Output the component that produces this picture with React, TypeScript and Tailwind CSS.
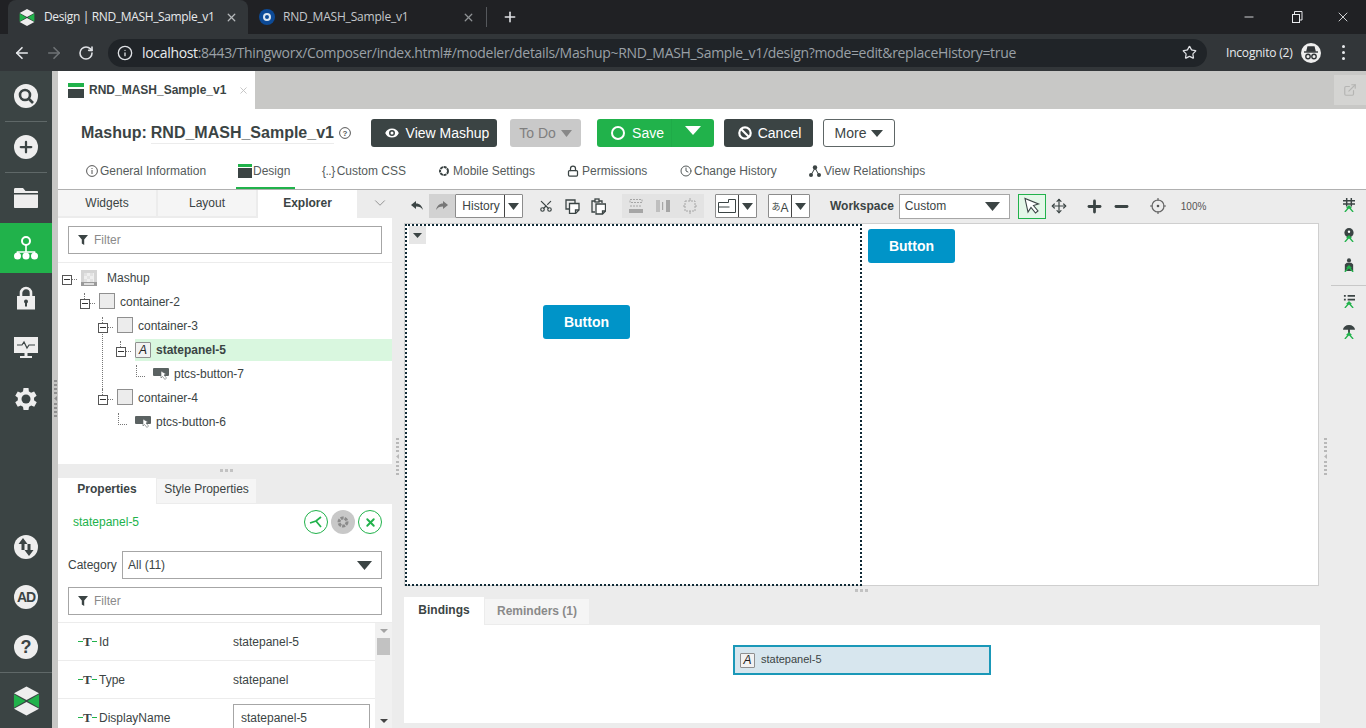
import React from "react";
import { ArrowLeft, ArrowRight, RotateCw, Info, Star, X, Plus, Minus, Scissors, ChevronDown, Move, Eye, ExternalLink, Clock, Lock } from "lucide-react";

const Tri = ({ w = 12, h = 8, c = "#3b4444" }: { w?: number; h?: number; c?: string }) => (
  <svg width={w} height={h} viewBox="0 0 12 8" preserveAspectRatio="none" className="shrink-0">
    <polygon points="0,0 12,0 6,8" fill={c} />
  </svg>
);

const FilterIcon = () => (
  <svg width="10" height="10" viewBox="0 0 10 10" className="shrink-0">
    <polygon points="0,0 10,0 6.2,4.5 6.2,10 3.8,8.5 3.8,4.5" fill="#3b4444" />
  </svg>
);

const TwxLogo = ({ w, h }: { w: number; h: number }) => (
  <svg width={w} height={h} viewBox="0 0 28 30" className="shrink-0">
    <polygon points="14,0 27,7 14,14 1,7" fill="#eeeeee" />
    <polygon points="14,16 27,23 14,30 1,23" fill="#eeeeee" />
    <polygon points="1,8 13,15 1,22" fill="#21b24b" />
    <polygon points="27,8 15,15 27,22" fill="#21b24b" />
  </svg>
);

const RailCircle = ({ children }: { children: React.ReactNode }) => (
  <div className="flex h-[24px] w-[24px] items-center justify-center rounded-full bg-[#eeeeee] text-[#3b4444]">{children}</div>
);

const RailItem = ({ h = 50, border, active, children }: { h?: number; border?: boolean; active?: boolean; children: React.ReactNode }) => (
  <div
    className={`flex shrink-0 items-center justify-center ${active ? "bg-[#21b24b]" : ""} ${border ? "mx-[5px] border-b border-[#5f6868]" : ""}`}
    style={{ height: h }}
  >
    {children}
  </div>
);

const Rail = () => (
  <div className="flex w-[52px] shrink-0 flex-col bg-[#3b4444]">
    <RailItem h={51} border>
      <RailCircle>
        <svg width="18" height="18" viewBox="0 0 18 18" fill="none" stroke="#3b4444" strokeWidth="2.6">
          <circle cx="8" cy="8" r="5" />
          <path d="M11.5 11.5L16 16" />
        </svg>
      </RailCircle>
    </RailItem>
    <RailItem h={51} border>
      <RailCircle>
        <Plus size={18} strokeWidth={3} />
      </RailCircle>
    </RailItem>
    <RailItem h={50}>
      <svg width="26" height="22" viewBox="0 0 26 22">
        <path d="M1 2.5C1 1.5 1.5 1 2.5 1H10l2.5 3H24c.7 0 1 .4 1 1v1H1z" fill="#eeeeee" />
        <path d="M1 7.5h24V20c0 .7-.4 1-1 1H2c-.7 0-1-.4-1-1z" fill="#eeeeee" />
      </svg>
    </RailItem>
    <RailItem active>
      <svg width="26" height="26" viewBox="0 0 26 26" fill="none">
        <circle cx="13" cy="6" r="4" stroke="#fff" strokeWidth="2" />
        <path d="M13 10v7M4.5 20v-3h17v3" stroke="#fff" strokeWidth="1.6" />
        <circle cx="4.5" cy="21" r="3.5" fill="#fff" />
        <circle cx="13" cy="21" r="3.5" fill="#fff" />
        <circle cx="21.5" cy="21" r="3.5" fill="#fff" />
      </svg>
    </RailItem>
    <RailItem>
      <svg width="20" height="24" viewBox="0 0 20 24">
        <path d="M5 11V7a5 5 0 0110 0v4" fill="none" stroke="#eeeeee" strokeWidth="2.6" />
        <rect x="1" y="10" width="18" height="13.5" fill="#eeeeee" />
        <circle cx="10" cy="15.5" r="2" fill="#3b4444" />
        <rect x="9" y="16" width="2" height="4.5" fill="#3b4444" />
      </svg>
    </RailItem>
    <RailItem>
      <svg width="24" height="22" viewBox="0 0 24 22">
        <rect x="0" y="0" width="24" height="16" fill="#eeeeee" />
        <path d="M3 8h5l2-3 3 6 2-3h6" fill="none" stroke="#3b4444" strokeWidth="1.2" />
        <rect x="10.5" y="16" width="3" height="3" fill="#eeeeee" />
        <rect x="6" y="19" width="12" height="2" fill="#eeeeee" />
      </svg>
    </RailItem>
    <RailItem>
      <svg width="30" height="30" viewBox="0 0 24 24" className="mt-[2px]">
        <path
          d="M19.4 13a7.6 7.6 0 000-2l2.1-1.6-2-3.5-2.5 1a7.6 7.6 0 00-1.7-1L15 3.2h-4l-.4 2.7a7.6 7.6 0 00-1.7 1l-2.5-1-2 3.5L6.500 11a7.6 7.6 0 000 2l-2.1 1.6 2 3.5 2.5-1a7.6 7.6 0 001.7 1l.4 2.7h4l.4-2.7a7.6 7.6 0 001.7-1l2.5 1 2-3.500z"
          fill="#eeeeee"
          transform="translate(-1 0)"
        />
        <circle cx="12" cy="12" r="3.6" fill="#3b4444" />
      </svg>
    </RailItem>
    <div className="flex-1" />
    <RailItem>
      <RailCircle>
        <svg width="18" height="20" viewBox="0 0 18 20" fill="#3b4444">
          <path d="M6 1L1.5 7H4.5V13H7.5V7H10.500z" />
          <path d="M12 19L16.500 13H13.500V7H10.500V13H7.500z" />
        </svg>
      </RailCircle>
    </RailItem>
    <RailItem>
      <RailCircle>
        <span className="text-[14px] font-bold tracking-[-1px]">AD</span>
      </RailCircle>
    </RailItem>
    <RailItem>
      <RailCircle>
        <span className="text-[18px] font-bold">?</span>
      </RailCircle>
    </RailItem>
    <div className="flex h-[56px] shrink-0 items-center justify-center border-t border-[#5f6868]">
      <TwxLogo w={27} h={30} />
    </div>
  </div>
);

const ChromeBar = () => (
  <div className="shrink-0 font-['Open_Sans',sans-serif]">
    <div className="flex h-[34px] items-center bg-[#202124] text-[12px]">
      <div className="ml-[8px] flex h-[34px] w-[240px] items-center rounded-t-[8px] bg-[#323639] pl-[11px] pr-[10px] text-[#e8eaed]">
        <TwxLogo w={16} h={17} />
        <span className="ml-[9px] flex-1 truncate tracking-[-0.35px]">Design | RND_MASH_Sample_v1</span>
        <X size={13} strokeWidth={2.4} className="text-[#b5b8bb]" />
      </div>
      <div className="flex h-[34px] w-[238px] items-center pl-[11px] pr-[11px] text-[#c5c8cb]">
        <div className="flex h-[16px] w-[16px] items-center justify-center rounded-full bg-[#0d4a96]">
          <div className="h-[8px] w-[8px] rounded-full border-2 border-[#dce6f0]" />
        </div>
        <span className="ml-[8px] flex-1 truncate tracking-[-0.2px]">RND_MASH_Sample_v1</span>
        <X size={13} strokeWidth={2.4} className="text-[#8f9295]" />
      </div>
      <div className="h-[20px] w-px bg-[#55585c]" />
      <Plus size={16} strokeWidth={2.4} className="ml-[15px] text-[#dfe1e5]" />
      <div className="flex-1" />
      <Minus size={14} strokeWidth={1.5} className="mr-[35px] text-[#e8eaed]" />
      <svg width="12" height="12" viewBox="0 0 12 12" fill="none" stroke="#e8eaed" className="mr-[32px]">
        <rect x="1.500" y="3.500" width="7" height="8" />
        <path d="M3.500 3V.5H11V9H9" />
      </svg>
      <X size={16} strokeWidth={1.3} className="mr-[15px] text-[#e8eaed]" />
    </div>
    <div className="flex h-[37px] items-center bg-[#323639]">
      <ArrowLeft size={18} strokeWidth={2.2} className="ml-[13px] text-[#e8eaed]" />
      <ArrowRight size={18} strokeWidth={2.2} className="ml-[14px] text-[#6f7376]" />
      <RotateCw size={16} strokeWidth={2.4} className="ml-[15px] text-[#dfe1e5]" />
      <div className="ml-[14px] flex h-[28px] w-[1099px] items-center rounded-full bg-[#202428] pl-[9px] pr-[10px] text-[14px]">
        <Info size={16} className="text-[#dfe1e5]" />
        <span className="ml-[9px] flex-1 tracking-[-0.32px] text-[#9aa0a6]">
          <span className="text-[#e8eaed]">localhost</span>:8443/Thingworx/Composer/index.html#/modeler/details/Mashup~RND_MASH_Sample_v1/design?mode=edit&amp;replaceHistory=true
        </span>
        <Star size={15} strokeWidth={2} className="text-[#dfe1e5]" />
      </div>
      <span className="ml-[19px] text-[12px] tracking-[-0.2px] text-[#e8eaed]">Incognito (2)</span>
      <div className="ml-[8px] flex h-[20px] w-[20px] items-center justify-center rounded-full bg-[#eeeeee]">
        <svg width="16" height="14" viewBox="0 0 16 14" fill="none" stroke="#323639" strokeWidth="1.400">
          <path d="M1 6h14" />
          <path d="M4 5l1-4h6l1 4z" fill="#323639" />
          <circle cx="5" cy="10.500" r="2.200" />
          <circle cx="11" cy="10.500" r="2.200" />
        </svg>
      </div>
      <div className="ml-[21px] flex flex-col gap-[3px]">
        <div className="h-[3px] w-[3px] rounded-full bg-[#e8eaed]" />
        <div className="h-[3px] w-[3px] rounded-full bg-[#e8eaed]" />
        <div className="h-[3px] w-[3px] rounded-full bg-[#e8eaed]" />
      </div>
    </div>
  </div>
);

const DesignGlyph = ({ size = 14 }: { size?: number }) => (
  <svg width={size} height={size} viewBox="0 0 14 14" className="shrink-0">
    <rect width="14" height="3" fill="#21b24b" />
    <rect y="4" width="14" height="10" fill="#3b4444" />
  </svg>
);

const TabRow = () => (
  <div className="flex h-[38px] shrink-0 bg-[#c8c8c6]">
    <div className="flex w-[197px] items-center bg-white pl-[10px] text-[12px] font-bold text-[#3b4444]">
      <svg width="16" height="15" viewBox="0 0 16 15" className="shrink-0">
        <rect width="16" height="4" fill="#21b24b" />
        <rect y="6" width="16" height="9" fill="#3b4444" />
      </svg>
      <span className="ml-[5px]">RND_MASH_Sample_v1</span>
      <X size={11} strokeWidth={2} className="ml-[12px] text-[#c2c2c2]" />
    </div>
    <div className="flex-1" />
    <div className="my-[4px] flex w-[32px] items-center justify-center bg-[#d4d4d2]">
      <ExternalLink size={14} className="text-[#b5b5b3]" />
    </div>
  </div>
);

const Btn = ({ w, className, children }: { w: number; className: string; children: React.ReactNode }) => (
  <div className={`flex h-[28px] shrink-0 items-center justify-center rounded-[3px] text-[14px] ${className}`} style={{ width: w }}>
    {children}
  </div>
);

const NavItem = ({ icon, label, w, pl = 2, gap = 2, active }: { icon: React.ReactNode; label: string; w: number; pl?: number; gap?: number; active?: boolean }) => (
  <div
    className={`flex h-[35px] shrink-0 items-center border-b-2 text-[12px] ${active ? "border-[#21b24b]" : "border-transparent"}`}
    style={{ width: w, paddingLeft: pl }}
  >
    {icon}
    <span style={{ marginLeft: gap }}>{label}</span>
  </div>
);

const Header = () => (
  <div className="flex h-[80px] shrink-0 flex-col bg-white pl-[23px]">
    <div className="flex h-[45px] items-start pt-[10px]">
      <div className="flex h-[28px] w-[290px] shrink-0 items-center text-[16px] font-bold text-[#3b4444]">
        <span>Mashup:</span>
        <span className="ml-[4px] border-b border-[#ececec] leading-[20px]">RND_MASH_Sample_v1</span>
        <svg width="12" height="12" viewBox="0 0 12 12" fill="none" stroke="#555" className="ml-[5px]">
          <circle cx="6" cy="6" r="5.400" />
          <text x="6" y="9" fontSize="8" textAnchor="middle" fill="#555" stroke="none">?</text>
        </svg>
      </div>
      <Btn w={126} className="bg-[#3b4444] pl-[4px] text-white">
        <Eye size={18} fill="#fff" stroke="#3b4444" className="mr-[5px]" />
        View Mashup
      </Btn>
      <Btn w={71} className="ml-[13px] bg-[#c9c9c9] text-[#7f7f7f]">
        To Do
        <span className="ml-[5px]">
          <Tri w={11} h={7} c="#888888" />
        </span>
      </Btn>
      <Btn w={117} className="ml-[16px] bg-[#21b24b] text-white">
        <div className="flex h-full w-[75px] items-center justify-end border-r border-[#1fab48] pr-[7px]">
          <div className="mr-[7px] h-[14px] w-[14px] rounded-full border-2 border-white" />
          Save
        </div>
        <div className="flex h-full flex-1 items-center justify-center pb-[6px]">
          <Tri w={16} h={9} c="#ffffff" />
        </div>
      </Btn>
      <Btn w={89} className="ml-[10px] bg-[#3b4444] pl-[2px] text-white">
        <svg width="14" height="14" viewBox="0 0 14 14" fill="none" stroke="#fff" strokeWidth="2.200" className="mr-[6px]">
          <circle cx="7" cy="7" r="5.700" />
          <path d="M3 3l8 8" />
        </svg>
        Cancel
      </Btn>
      <Btn w={72} className="ml-[10px] border border-[#5e6666] bg-white text-[#3b4444]">
        More
        <span className="ml-[5px]">
          <Tri w={12} h={7} />
        </span>
      </Btn>
    </div>
    <div className="flex text-[#555b5b]">
      <NavItem
        w={155}
        pl={5}
        label="General Information"
        icon={
          <svg width="12" height="12" viewBox="0 0 12 12" fill="none" stroke="#555">
            <circle cx="6" cy="6" r="5.400" />
            <path d="M6 5v4M6 3v1" />
          </svg>
        }
      />
      <NavItem w={59} gap={1} active label="Design" icon={<DesignGlyph />} />
      <div className="w-[24px]" />
      <NavItem w={116} pl={3} label="Custom CSS" icon={<span className="text-[12px] tracking-[-0.5px]">{"{..}"}</span>} />
      <NavItem
        w={130}
        pl={3}
        gap={3}
        label="Mobile Settings"
        icon={
          <svg width="12" height="12" viewBox="0 0 12 12" fill="none" stroke="#3b4444" strokeWidth="2">
            <circle cx="6" cy="6" r="4" strokeDasharray="3 .6" />
          </svg>
        }
      />
      <NavItem w={111} gap={3} label="Permissions" icon={<Lock size={12} strokeWidth={2.500} className="text-[#3b4444]" />} />
      <NavItem w={131} pl={4} label="Change History" icon={<Clock size={12} />} />
      <NavItem
        w={130}
        gap={3}
        label="View Relationships"
        icon={
          <svg width="12" height="12" viewBox="0 0 12 12" fill="#3b4444">
            <circle cx="6" cy="2.500" r="2.200" />
            <circle cx="2" cy="10" r="2" />
            <circle cx="10" cy="10" r="2" />
            <path d="M5.500 3L1.500 10h1L6 4l3.500 6h1L6.500 3z" />
          </svg>
        }
      />
    </div>
  </div>
);

const SearchBox = () => (
  <div className="flex h-[28px] items-center border border-[#a6a6a6] bg-white pl-[9px] text-[12px] text-[#8a8a8a]">
    <FilterIcon />
    <span className="ml-[6px]">Filter</span>
  </div>
);

const PanelTab = ({ label, w, active }: { label: string; w: number; active?: boolean }) => (
  <div
    className={`flex shrink-0 items-center justify-center text-[12px] text-[#3b4444] ${active ? "h-[28px] bg-white pb-[3px] font-bold" : "mr-[2px] h-[26px] bg-[#f5f5f5]"}`}
    style={{ width: w }}
  >
    {label}
  </div>
);

const Toggle = () => (
  <div className="relative mt-[3px] flex h-[10px] w-[10px] shrink-0 items-center justify-center border border-[#555] bg-white">
    <div className="h-px w-[6px] bg-[#333]" />
  </div>
);

const StateGlyph = ({ size = 16 }: { size?: number }) => (
  <div
    className="flex shrink-0 items-center justify-center rounded-[1px] border border-[#8f8f8f] bg-[#f2f2f2] text-[12px] italic leading-none text-[#222]"
    style={{ width: size, height: size }}
  >
    A
  </div>
);

const BoxGlyph = () => <div className="mb-[3px] h-[16px] w-[16px] shrink-0 border border-[#8f8f8f] bg-[#ececec]" />;

const ButtonGlyph = () => (
  <svg width="16" height="13" viewBox="0 0 16 13" className="shrink-0">
    <rect width="16" height="8" rx="1" fill="#5b6262" />
    <path d="M8 3l5 3-2 1 2.500 3-1.500 1.500L9.500 8.500 8 10z" fill="#fff" stroke="#5b6262" strokeWidth=".6" />
  </svg>
);

const MashupGlyph = () => (
  <svg width="16" height="16" viewBox="0 0 16 16" className="shrink-0">
    <rect width="16" height="16" fill="#d5d5d5" />
    <rect x="3" y="3" width="10" height="9" fill="#efefef" />
    <path d="M3 3h3v3H3zm6 0h3v3H9zM6 6h3v3H6zM3 9h3v3H3zm6 0h3v3H9z" fill="#e2e2e2" />
    <rect y="12" width="16" height="4" fill="#9a9a9a" />
    <rect x="3" y="13" width="10" height="2" fill="#dddddd" />
  </svg>
);

const treeRows = [
  { label: "Mashup", x: 4, icon: <MashupGlyph />, gap: 10, toggle: true },
  { label: "container-2", x: 22, icon: <BoxGlyph />, gap: 5, toggle: true, stem: true },
  { label: "container-3", x: 40, icon: <BoxGlyph />, gap: 5, toggle: true, stem: true },
  { label: "statepanel-5", x: 58, icon: <StateGlyph />, gap: 5, toggle: true, stem: true, selected: true },
  { label: "ptcs-button-7", x: 76, icon: <ButtonGlyph />, gap: 5, toggle: false },
  { label: "container-4", x: 40, icon: <BoxGlyph />, gap: 5, toggle: true, stem: true },
  { label: "ptcs-button-6", x: 58, icon: <ButtonGlyph />, gap: 5, toggle: false },
];

const Tree = () => (
  <div className="relative flex flex-col pt-[3px] text-[12px] text-[#3b4444]">
    {/* long guide from container-3 down to container-4 */}
    <div className="absolute left-[44px] top-[54px] h-[76px] border-l border-dotted border-[#777]" />
    {treeRows.map((row) => (
      <div key={row.label} className="relative flex h-[24px] items-center" style={{ paddingLeft: row.x }}>
        {row.selected && <div className="absolute bottom-[1px] left-[77px] right-0 top-[1px] bg-[#d9f7df]" />}
        {row.toggle ? (
          <>
            {row.stem && <div className="absolute top-[3px] h-[6px] border-l border-dotted border-[#777]" style={{ left: row.x + 4 }} />}
            <Toggle />
            <div className="mt-[3px] w-[5px] border-t border-dotted border-[#777]" />
          </>
        ) : (
          <div className="mb-[6px] mr-[4px] ml-[2px] h-[12px] w-[9px] border-b border-l border-dotted border-[#777]" />
        )}
        <div className="relative ml-[4px] flex items-center">
          {row.icon}
          <span className={row.selected ? "font-bold" : ""} style={{ marginLeft: row.gap }}>
            {row.label}
          </span>
        </div>
      </div>
    ))}
  </div>
);

const TGlyph = () => (
  <div className="flex w-[17px] shrink-0 items-center">
    <div className="h-px w-[5px] shrink-0 bg-[#21b24b]" />
    <span className="font-['Liberation_Serif',serif] text-[13px] font-bold leading-none text-[#3b4444]">T</span>
    <div className="h-px w-[5px] shrink-0 bg-[#21b24b]" />
  </div>
);

const PropRow = ({ label, h = 38, children }: { label: string; h?: number; children: React.ReactNode }) => (
  <div className="flex shrink-0 items-center border-b border-[#ececec] pl-[20px]" style={{ height: h }}>
    <TGlyph />
    <span className="ml-[4px] w-[134px] shrink-0">{label}</span>
    {children}
  </div>
);

const ActionCircle = ({ gray, children }: { gray?: boolean; children: React.ReactNode }) => (
  <div
    className={`flex h-[24px] w-[24px] items-center justify-center rounded-full ${gray ? "bg-[#c8c8c8]" : "border border-[#21b24b] bg-white"}`}
  >
    {children}
  </div>
);

const LeftPanel = () => (
  <div className="flex w-[334px] shrink-0 flex-col">
    <div className="flex h-[28px] shrink-0">
      <PanelTab label="Widgets" w={98} />
      <PanelTab label="Layout" w={98} />
      <PanelTab label="Explorer" w={99} active />
      <div className="flex flex-1 items-center justify-end pb-[2px] pr-[3px]">
        <ChevronDown size={18} strokeWidth={1} className="text-[#777]" />
      </div>
    </div>
    <div className="h-[246px] shrink-0 bg-white">
      <div className="border-b border-[#ececec] px-[10px] pb-[8px] pt-[8px]">
        <SearchBox />
      </div>
      <Tree />
    </div>
    <div className="h-[14px] shrink-0" />
    <div className="flex h-[26px] shrink-0">
      <div className="flex h-[26px] w-[98px] items-center justify-center bg-white pb-[5px] text-[12px] font-bold text-[#3b4444]">Properties</div>
      <div className="ml-px mt-px flex h-[24px] w-[99px] items-center justify-center bg-[#f5f5f5] pb-[5px] text-[12px] text-[#3b4444]">Style Properties</div>
    </div>
    <div className="flex min-h-0 flex-1 flex-col bg-white text-[12px] text-[#3b4444]">
      <div className="flex h-[47px] shrink-0 items-center justify-between pb-[11px] pl-[15px] pr-[10px]">
        <span className="text-[#21b24b]">statepanel-5</span>
        <div className="flex gap-[3px]">
          <ActionCircle>
            <svg width="14" height="14" viewBox="0 0 14 14" fill="none" stroke="#21b24b" strokeWidth="1.800">
              <path d="M1 8l6-2 5-4M7 6l5 6" />
            </svg>
          </ActionCircle>
          <ActionCircle gray>
            <svg width="14" height="14" viewBox="0 0 14 14" fill="none" stroke="#8a8a8a" strokeWidth="3">
              <circle cx="7" cy="7" r="4" strokeDasharray="3 1" />
            </svg>
          </ActionCircle>
          <ActionCircle>
            <X size={13} strokeWidth={3.500} className="text-[#21b24b]" />
          </ActionCircle>
        </div>
      </div>
      <div className="flex shrink-0 items-center px-[10px]">
        <span className="w-[54px] shrink-0">Category</span>
        <div className="flex h-[28px] flex-1 items-center justify-between border border-[#a6a6a6] pl-[5px] pr-[9px]">
          <span>All (11)</span>
          <Tri w={15} h={9} />
        </div>
      </div>
      <div className="shrink-0 px-[10px] pb-[7px] pt-[8px]">
        <SearchBox />
      </div>
      <div className="flex min-h-0 flex-1 border-t border-[#ececec]">
        <div className="flex min-h-0 flex-1 flex-col">
          <PropRow label="Id">
            <span>statepanel-5</span>
          </PropRow>
          <PropRow label="Type">
            <span>statepanel</span>
          </PropRow>
          <PropRow label="DisplayName">
            <div className="flex h-[28px] w-[137px] items-center border border-[#a6a6a6] pl-[7px]">statepanel-5</div>
          </PropRow>
        </div>
        <div className="flex w-[17px] shrink-0 flex-col items-center bg-[#f1f1f1] pt-[6px]">
          <Tri w={8} h={4} c="#a3a3a3" />
          <div className="mt-[5px] h-[17px] w-[13px] bg-[#c2c2c2]" />
          <div className="flex-1" />
          <div className="mb-[5px]">
            <Tri w={8} h={4} c="#444" />
          </div>
        </div>
      </div>
    </div>
  </div>
);

const ToolSelect = ({ w, children }: { w: number; children: React.ReactNode }) => (
  <div className="flex h-[24px] shrink-0 items-stretch rounded-[1px] border border-[#8c8c8c] bg-white" style={{ width: w }}>
    <div className="flex flex-1 items-center justify-center">{children}</div>
    <div className="flex w-[18px] items-center justify-center border-l border-[#444]">
      <Tri w={11} h={7} />
    </div>
  </div>
);

const Toolbar = () => (
  <div className="flex h-[33px] shrink-0 items-center pb-[1px] pl-[4px] text-[12px] text-[#3b4444]">
    <div className="flex h-[24px] w-[18px] items-center justify-center">
      <svg width="12" height="10" viewBox="0 0 12 10" fill="#3b4444">
        <path d="M0 4l5-4v2.500c4 0 6 2.500 7 6.500-1.500-2.500-3.500-3.500-7-3.500V8z" />
      </svg>
    </div>
    <div className="ml-[3px] flex h-[24px] w-[26px] items-center justify-center bg-[#d2d2d2]">
      <svg width="12" height="10" viewBox="0 0 12 10" fill="#777">
        <path d="M12 4L7 0v2.500C3 2.500 1 5 0 9c1.500-2.500 3.500-3.500 7-3.500V8z" />
      </svg>
    </div>
    <ToolSelect w={68}>
      <span className="pl-[2px]">History</span>
    </ToolSelect>
    <Scissors size={14} className="ml-[16px] rotate-[-90deg]" strokeWidth={2} />
    <svg width="15" height="15" viewBox="0 0 15 15" fill="none" stroke="#3b4444" strokeWidth="1.300" className="ml-[12px] shrink-0">
      <path d="M4 10H1V1h9v3" />
      <path d="M4.500 4.500h9.500v6.500l-3.500 3.500h-6z" fill="#fff" />
      <path d="M14 11h-3.500v3.500" />
    </svg>
    <svg width="15" height="17" viewBox="0 0 15 17" fill="none" stroke="#3b4444" strokeWidth="1.300" className="ml-[11px] shrink-0">
      <path d="M4 3H1v11h3" />
      <path d="M8 3h3v2" />
      <rect x="4" y="1" width="4" height="3" />
      <path d="M5 6h9.500v7l-3 3H5z" fill="#fff" />
      <path d="M14.500 13h-3v3" />
    </svg>
    <div className="ml-[16px] flex h-[24px] w-[82px] shrink-0 items-center justify-around bg-[#e3e3e3] text-[#a6a6a6]">
      <svg width="14" height="16" viewBox="0 0 14 16" fill="none" stroke="#a6a6a6">
        <path d="M1 1.500h12v3H1zM1 8h12" strokeDasharray="2 1" />
        <rect x="0" y="11" width="14" height="4" fill="#a6a6a6" stroke="none" />
      </svg>
      <svg width="14" height="14" viewBox="0 0 14 14" fill="#a6a6a6">
        <rect x="0" y="1" width="4" height="12" opacity=".6" />
        <rect x="6" y="3" width="1.200" height="8" />
        <rect x="10" y="1" width="4" height="12" />
      </svg>
      <svg width="14" height="16" viewBox="0 0 14 16" fill="none" stroke="#a6a6a6">
        <rect x="2" y="3" width="10" height="10" strokeDasharray="2 1" />
        <path d="M7 0v3M7 13v3M0 8h2M12 8h2" />
      </svg>
    </div>
    <div className="ml-[11px]">
      <ToolSelect w={42}>
        <svg width="18" height="14" viewBox="0 0 18 14" fill="none" stroke="#3b4444">
          <path d="M.5 3.500h10V.5h7v13H.5zM.5 8h11" />
        </svg>
      </ToolSelect>
    </div>
    <div className="ml-[11px]">
      <ToolSelect w={42}>
        <span className="font-['Noto_Sans_CJK_JP',sans-serif] text-[9px] leading-none">あ</span>
        <span className="mt-[4px] text-[12px] leading-none">A</span>
      </ToolSelect>
    </div>
    <span className="ml-[20px] font-bold">Workspace</span>
    <div className="ml-[5px] flex h-[25px] w-[111px] shrink-0 items-center justify-between border border-[#a6a6a6] bg-white pl-[5px] pr-[9px]">
      Custom
      <Tri w={15} h={9} />
    </div>
    <div className="ml-[8px] flex h-[25px] w-[28px] shrink-0 items-center justify-center border border-[#21b24b] bg-[#e4f7e8]">
      <svg width="18" height="18" viewBox="0 0 18 18" fill="#fff" stroke="#3b4444" strokeWidth="1.100">
        <path d="M2 1.500l3 13.500 3-4.500 4.500 5.500 2.500-2-4.500-5.500 5-1.500z" />
      </svg>
    </div>
    <Move size={16} strokeWidth={1.800} className="ml-[5px] shrink-0" />
    <Plus size={19} strokeWidth={3.500} className="ml-[18px] shrink-0" />
    <Minus size={19} strokeWidth={3.500} className="ml-[8px] shrink-0" />
    <svg width="16" height="16" viewBox="0 0 16 16" fill="none" stroke="#666" strokeWidth="1.200" className="ml-[19px] shrink-0">
      <circle cx="8" cy="8" r="6" />
      <circle cx="8" cy="8" r="1.300" fill="#555" stroke="none" />
      <path d="M8 0v3M8 13v3M0 8h3M13 8h3" />
    </svg>
    <span className="ml-[15px] text-[10px] text-[#555]">100%</span>
  </div>
);

const MashupButton = () => (
  <div className="flex h-[34px] w-[87px] shrink-0 items-center justify-center rounded-[3px] bg-[#0094c8] text-[14px] font-bold text-white">Button</div>
);

const Canvas = () => (
  <div className="flex h-[363px] w-[915px] shrink-0 border border-[#cfcfcf] bg-white">
    <div className="relative h-[362px] w-[457px] shrink-0 border-2 border-dotted border-[#0f2a36] pl-[136px] pt-[79px]">
      <div className="absolute left-[2px] top-0 flex h-[18px] w-[17px] items-center justify-center bg-[#e6e6e6]">
        <Tri w={9} h={5} />
      </div>
      <MashupButton />
    </div>
    <div className="pl-[6px] pt-[5px]">
      <MashupButton />
    </div>
  </div>
);

const Bindings = () => (
  <div className="flex w-[916px] flex-col pt-[11px]">
    <div className="flex h-[28px] shrink-0 text-[12px] font-bold">
      <div className="flex h-[28px] w-[80px] items-center justify-center bg-white pb-[2px] text-[#3b4444]">Bindings</div>
      <div className="ml-[1px] mt-[2px] flex h-[25px] w-[104px] items-center justify-center bg-[#f5f5f5] pb-[2px] text-[#8a8a8a]">Reminders (1)</div>
    </div>
    <div className="h-[98px] bg-white pl-[329px] pt-[20px]">
      <div className="flex h-[30px] w-[258px] items-center border-2 border-[#1a98b8] bg-[#d7e6ee] pl-[5px] text-[11px] text-[#3b4444]">
        <StateGlyph size={15} />
        <span className="mb-[2px] ml-[6px]">statepanel-5</span>
      </div>
    </div>
  </div>
);

const SideGlyph = ({ children }: { children: React.ReactNode }) => (
  <svg width="12" height="14" viewBox="0 0 13 15" className="shrink-0">
    {children}
    <path d="M2 15l4.500-5 4.500 5M4 11l2.500-2.500L9 11" fill="none" stroke="#21b24b" strokeWidth="1.500" />
  </svg>
);

const SideRail = () => (
  <div className="flex w-[47px] shrink-0 flex-col items-end">
    <div className="flex w-[35px] flex-col items-center border-b border-[#c8c8c8] pb-[13px] pt-[8px]">
      <SideGlyph>
        <path d="M4 0v9M9 0v9M0 3h13M0 6.500h13" stroke="#3b4444" strokeWidth="1.600" />
      </SideGlyph>
      <div className="mt-[16px]">
        <SideGlyph>
          <circle cx="6.500" cy="5" r="5" fill="#3b4444" />
          <circle cx="6.500" cy="4" r="1.300" fill="#fff" />
        </SideGlyph>
      </div>
      <div className="mt-[16px]">
        <SideGlyph>
          <circle cx="6.500" cy="2.500" r="2.200" fill="#3b4444" />
          <path d="M2 14V7l2-2h5l2 2v7z" fill="#3b4444" />
        </SideGlyph>
      </div>
    </div>
    <div className="flex w-[35px] flex-col items-center pt-[8px]">
      <SideGlyph>
        <path d="M1 2h2M5 2h8M1 6h2M5 6h8" stroke="#3b4444" strokeWidth="2" />
      </SideGlyph>
      <div className="mt-[17px]">
        <SideGlyph>
          <path d="M0 5a6.500 5 0 0113 0zM5.500 5h2v4h-2z" fill="#3b4444" />
        </SideGlyph>
      </div>
    </div>
  </div>
);

const Grip = ({ className, c = "#b8b8b8" }: { className: string; c?: string }) => (
  <div className={`absolute flex flex-col items-center gap-[2px] ${className}`}>
    {[0, 1, 2, 3].map((i) => (
      <div key={i} className="h-[2px] w-[3px]" style={{ background: c }} />
    ))}
    <svg width="3" height="5" viewBox="0 0 3 5">
      <polygon points="3,0 3,5 0,2.500" fill={c} />
    </svg>
    {[0, 1, 2, 3].map((i) => (
      <div key={i} className="h-[2px] w-[3px]" style={{ background: c }} />
    ))}
  </div>
);

const HGrip = ({ className }: { className: string }) => (
  <div className={`absolute flex gap-[2px] ${className}`}>
    <div className="h-[3px] w-[3px] bg-[#c2c2c2]" />
    <div className="h-[3px] w-[3px] bg-[#c2c2c2]" />
    <div className="h-[3px] w-[3px] bg-[#c2c2c2]" />
  </div>
);

export default function App() {
  return (
    <div className="flex h-[728px] w-[1366px] flex-col overflow-hidden bg-[#ececec] font-['Liberation_Sans',sans-serif]">
      <ChromeBar />
      <div className="flex min-h-0 flex-1">
        <Rail />
        <div className="relative flex min-w-0 flex-1 flex-col border-l-[6px] border-[#c8c8c6]">
          <TabRow />
          <Header />
          <div className="relative flex min-h-0 flex-1 border-t border-[#b0b0b0]">
            <LeftPanel />
            <div className="flex w-[12px] shrink-0" />
            <div className="flex min-w-0 flex-col">
              <div className="w-[916px]">
                <Toolbar />
                <Canvas />
              </div>
              <Bindings />
            </div>
            <SideRail />
            <HGrip className="left-[162px] top-[279px]" />
            <HGrip className="left-[797px] top-[399px]" />
            <Grip className="left-[338px] top-[248px]" />
            <Grip className="left-[1266px] top-[248px]" />
          </div>
          <Grip className="left-[-4px] top-[309px]" c="#8f8f8f" />
        </div>
      </div>
    </div>
  );
}
